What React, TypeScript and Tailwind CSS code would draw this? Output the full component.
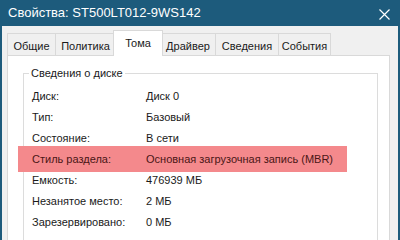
import React from "react";

const tabs: [string, string][] = [
  ["Общие", "w-[49px] ml-0"],
  ["Политика", "w-[61px] -ml-px"],
  ["Тома", "w-[50px] -ml-[3px]"],
  ["Драйвер", "w-[56px] -ml-[3px]"],
  ["Сведения", "w-[64px] -ml-px"],
  ["События", "w-[53px] -ml-px"],
];
const rows: [string, string, boolean?][] = [
  ["Диск:", "Диск 0"],
  ["Тип:", "Базовый"],
  ["Состояние:", "В сети"],
  ["Стиль раздела:", "Основная загрузочная запись (MBR)", true],
  ["Емкость:", "476939 МБ"],
  ["Незанятое место:", "2 МБ"],
  ["Зарезервировано:", "0 МБ"],
];

export default function App() {
  return (
    <div
      className="w-[400px] h-[240px] overflow-hidden bg-[#f0f0f0] border-x-2 border-[#1d5b7c] flex flex-col text-[11px] text-[#1a1a1a] whitespace-nowrap"
      style={{ fontFamily: '"Liberation Sans", Arial, sans-serif' }}
    >
      <div className="h-[26px] shrink-0 bg-[#1d5b7c] flex items-center justify-between pl-[6px] pr-[8px] text-white">
        <span className="text-[13px]">Свойства: ST500LT012-9WS142</span>
        <svg width="11" height="11" viewBox="0 0 11 11" className="mt-[2px]">
          <path d="M0.5 0.5 L10.5 10.5 M10.5 0.5 L0.5 10.5" stroke="white" strokeWidth="1.2" />
        </svg>
      </div>
      <div className="flex-1 flex flex-col pt-[4px] pl-[5px] pr-[8px]">
        <div className="flex items-end h-[25px] relative z-10">
          {tabs.map(([t, w]) =>
            t === "Тома" ? (
              <div
                key={t}
                className={`${w} h-[26px] -mb-px text-center pt-[4px] bg-white border border-b-0 border-[#d9d9d9] relative z-10`}
              >
                {t}
              </div>
            ) : (
              <div
                key={t}
                className={`${w} h-[22px] text-center pt-[4px] border border-b-0 border-[#d9d9d9] bg-[#f0f0f0]`}
              >
                {t}
              </div>
            )
          )}
        </div>
        <div className="flex-1 bg-white border border-[#d9d9d9] pl-[15px] pr-[11px] pt-[9px]">
          <fieldset className="border border-[#dcdcdc] h-[180px]">
            <legend className="ml-[5px] px-[2px] leading-[16px]">Сведения о диске</legend>
            <div className="flex flex-col pt-[5px] pl-[8px]">
              {rows.map(([l, v, hl]) =>
                hl ? (
                  <div
                    key={l}
                    className="flex items-center h-[26px] -mt-[3px] -mb-[2px] -ml-[14px] pl-[14px] w-[329px] bg-[#f4898c] text-[#4a1616]"
                  >
                    <span className="w-[114px] shrink-0">{l}</span>
                    <span>{v}</span>
                  </div>
                ) : (
                  <div key={l} className="flex items-center h-[21px]">
                    <span className="w-[114px] shrink-0">{l}</span>
                    <span>{v}</span>
                  </div>
                )
              )}
            </div>
          </fieldset>
        </div>
      </div>
    </div>
  );
}
